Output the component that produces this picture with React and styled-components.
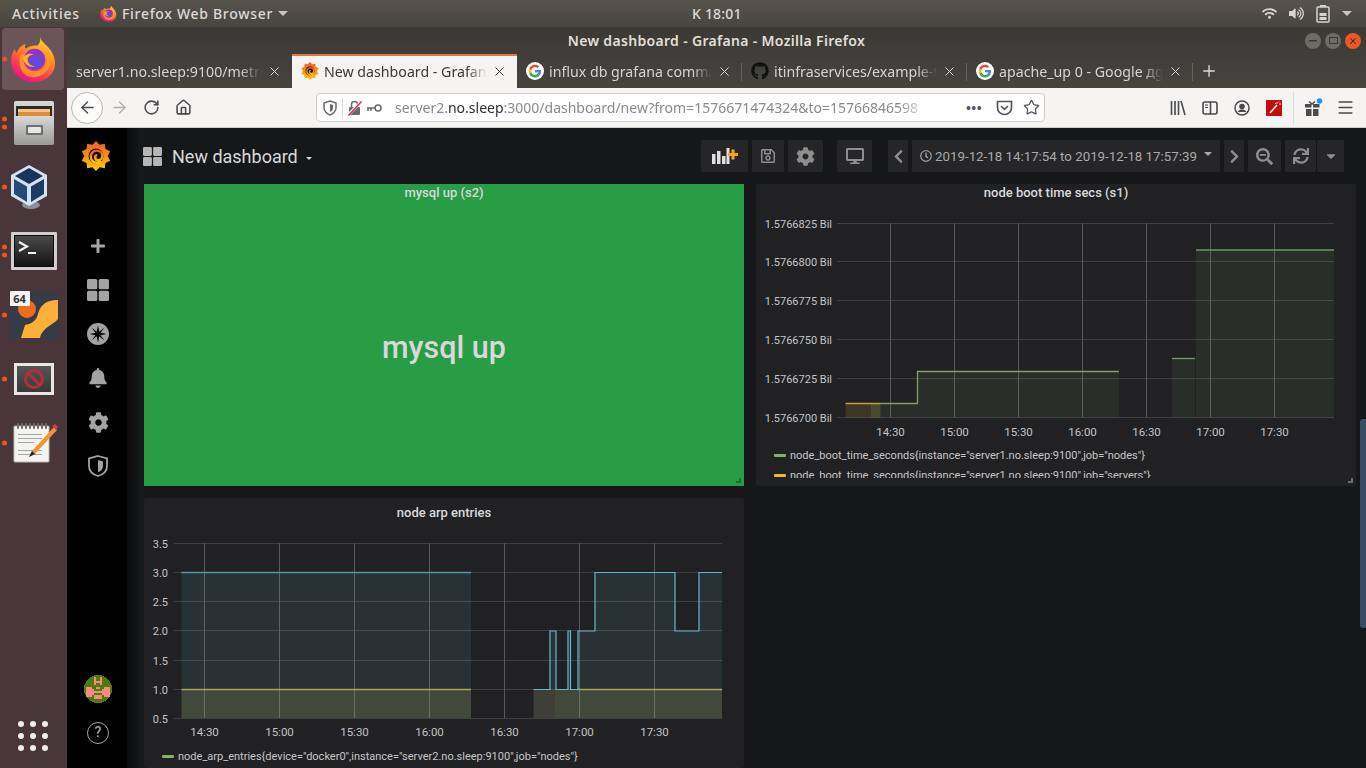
import React from 'react';
import styled, { createGlobalStyle } from 'styled-components';
import { X, Plus, ArrowLeft, ArrowRight, RotateCw, Home, Star, Menu } from 'lucide-react';
import {
  FaBell, FaCog, FaPlus, FaRegSave, FaDesktop, FaChevronLeft, FaChevronRight,
  FaSearchMinus, FaSync, FaRegClock, FaWifi, FaVolumeUp, FaGithub, FaCaretDown,
} from 'react-icons/fa';

const Global = createGlobalStyle`
  html, body { margin: 0; padding: 0; height: 768px; overflow: hidden; background: #161719; }
  #root { height: 768px; }
  * { box-sizing: border-box; }
`;

const UI_FONT = `"Noto Sans", "Open Sans", sans-serif`;
const GF_FONT = `Roboto, "Liberation Sans", sans-serif`;

const Screen = styled.div`
  width: 1366px;
  height: 768px;
  display: flex;
  flex-direction: column;
  overflow: hidden;
  position: relative;
`;

// ---------------------------------------------------------------------------
const TopBar = styled.div`
  height: 27px;
  flex: none;
  display: flex;
  align-items: center;
  padding-left: 12px;
  background: linear-gradient(#57544c, #47453e);
  color: #dcdad4;
  font: 500 14px ${UI_FONT};
`;
const Activities = styled.div`
  width: 88px;
  letter-spacing: 0.75px;
`;
const AppMenu = styled.div`
  width: 592px;
  display: flex;
  align-items: center;
  gap: 5px;
  letter-spacing: 0.7px;
`;
const Clock = styled.div`
  letter-spacing: 0.2px;
`;
const Tray = styled.div`
  margin-left: auto;
  display: flex;
  align-items: center;
  gap: 12px;
  padding-right: 14px;
`;
const Caret = styled.span`
  display: inline-block;
  border-left: ${p => p.$size || 5}px solid transparent;
  border-right: ${p => p.$size || 5}px solid transparent;
  border-top: ${p => p.$size || 5}px solid ${p => p.$color || '#c9c7c1'};
`;

const Body = styled.div`
  flex: 1;
  display: flex;
  min-height: 0;
`;

// ---------------------------------------------------------------------------
const Dock = styled.div`
  width: 67px;
  flex: none;
  display: flex;
  flex-direction: column;
  background: #48363b;
`;
const DockItem = styled.div`
  height: 64px;
  flex: none;
  display: flex;
  align-items: center;
  justify-content: center;
  position: relative;
  padding-right: ${p => p.$right || 0}px;
  padding-left: ${p => p.$left || 0}px;
  &::before {
    content: '';
    display: ${p => (p.$active ? 'block' : 'none')};
    position: absolute;
    left: 2px;
    right: 3px;
    top: 1px;
    bottom: 1px;
    border-radius: 4px;
    background: #6a5558;
  }
  & svg, & > div { position: relative; }
`;
const RunDots = styled.div`
  position: absolute !important;
  left: 2px;
  top: 50%;
  transform: translateY(-50%);
  display: flex;
  flex-direction: column;
  gap: 3px;
  z-index: 1;
`;
const RunDot = styled.span`
  display: block;
  width: 5px;
  height: 5px;
  border-radius: 50%;
  background: #e95420;
`;
const AppGrid = styled.div`
  margin-top: auto;
  margin-bottom: 17px;
  margin-left: 18px;
  width: 30px;
  display: grid;
  grid-template-columns: repeat(3, 6px);
  gap: 6px;
`;
const AppGridDot = styled.span`
  width: 6px;
  height: 6px;
  border-radius: 50%;
  background: #f1efec;
`;
const BadgeBox = styled.div`
  width: 48px;
  height: 48px;
  position: relative;
`;
const Badge64 = styled.span`
  position: absolute;
  left: 0;
  top: 0;
  width: 20px;
  height: 15px;
  background: #f4f4f4;
  border-radius: 1px;
  color: #333;
  font: 700 11px/15px ${UI_FONT};
  text-align: center;
`;

// ---------------------------------------------------------------------------
const Window = styled.div`
  flex: 1;
  min-width: 0;
  display: flex;
  flex-direction: column;
`;
const TitleBar = styled.div`
  height: 27px;
  flex: none;
  display: grid;
  grid-template-columns: 1fr auto 1fr;
  align-items: center;
  background: linear-gradient(#3a3934, #3f3e38);
  color: #e2dfd7;
  font: 600 14px ${UI_FONT};
  letter-spacing: 0.32px;
`;
const WindowTitle = styled.div`
  grid-column: 2;
`;
const WinButtons = styled.div`
  grid-column: 3;
  justify-self: end;
  display: flex;
  gap: 4px;
  padding-right: 5px;
`;
const WinButton = styled.div`
  width: 16px;
  height: 16px;
  border-radius: 50%;
  display: flex;
  align-items: center;
  justify-content: center;
  background: ${p => (p.$close ? '#e9572a' : '#6c6b64')};
  color: ${p => (p.$close ? '#5a2010' : '#3a3934')};
`;
const TabStrip = styled.div`
  height: 34px;
  flex: none;
  display: flex;
  align-items: stretch;
  background: linear-gradient(#3f3e38, #45443e);
`;
const Tab = styled.div`
  width: ${p => p.$w || 225}px;
  flex: none;
  display: flex;
  align-items: center;
  padding: 0 10px 2px 9px;
  gap: 5px;
  position: relative;
  color: ${p => (p.$active ? '#3a3a3a' : '#d6d4ce')};
  background: ${p => (p.$active ? '#f5f4f2' : 'transparent')};
  border-top: ${p => (p.$active ? '2px solid #e8734a' : '2px solid transparent')};
  font: 400 14.2px ${UI_FONT};
  &::after {
    content: '';
    display: ${p => (p.$sep ? 'block' : 'none')};
    position: absolute;
    right: 0;
    top: 7px;
    bottom: 7px;
    width: 1px;
    background: #64635c;
  }
`;
const TabLabel = styled.span`
  flex: 1;
  min-width: 0;
  white-space: nowrap;
  overflow: hidden;
  -webkit-mask-image: linear-gradient(to right, #000 88%, transparent 100%);
  mask-image: linear-gradient(to right, #000 88%, transparent 100%);
`;
const NewTab = styled.div`
  width: 32px;
  display: flex;
  align-items: center;
  justify-content: center;
  color: #dedcd6;
`;
const NavBar = styled.div`
  height: 40px;
  flex: none;
  display: flex;
  align-items: center;
  padding: 0 5px 0 4px;
  background: #f5f4f2;
  border-bottom: 1px solid #cfcdc9;
  color: #4a4a4f;
`;
const BackCircle = styled.div`
  width: 32px;
  height: 32px;
  border-radius: 50%;
  background: #fbfbfa;
  border: 1px solid #b8b7b3;
  display: flex;
  align-items: center;
  justify-content: center;
`;
const NavSlot = styled.div`
  width: 32px;
  height: 32px;
  flex: none;
  display: flex;
  align-items: center;
  justify-content: center;
  color: ${p => (p.$dim ? '#b1b1b1' : '#4a4a4f')};
`;
const UrlBar = styled.div`
  margin-left: 117px;
  width: 729px;
  height: 29px;
  flex: none;
  display: flex;
  align-items: center;
  background: #fff;
  border: 1px solid #cfcecb;
  border-radius: 4px;
  padding: 0 4px 0 6px;
`;
const UrlDivider = styled.span`
  width: 1px;
  height: 20px;
  background: #dcdcdc;
  margin: 0 5px 0 5px;
`;
const LockGap = styled.span`
  width: 4px;
  flex: none;
`;
const UrlText = styled.div`
  width: 535px;
  margin-left: 13px;
  white-space: nowrap;
  overflow: hidden;
  color: #8a8a8e;
  font: 400 14px ${UI_FONT};
  -webkit-mask-image: linear-gradient(to right, #000 94%, transparent 100%);
  mask-image: linear-gradient(to right, #000 94%, transparent 100%);
`;
const UrlHost = styled.span`
  color: #2f2f33;
`;
const UrlActions = styled.div`
  margin-left: auto;
  display: flex;
  align-items: center;
  gap: 10px;
  color: #55555a;
`;
const Dots = styled.span`
  font: 700 13px ${UI_FONT};
  letter-spacing: 0.5px;
  width: 24px;
  text-align: center;
`;
const NavTools = styled.div`
  margin-left: auto;
  display: flex;
  align-items: center;
`;
const NavSep = styled.span`
  width: 1px;
  height: 32px;
  background: #dddbd7;
  margin: 0 3px;
`;

// ---------------------------------------------------------------------------
const Grafana = styled.div`
  flex: 1;
  min-height: 0;
  display: flex;
  background: #161719;
  font-family: ${GF_FONT};
`;
const SideMenu = styled.div`
  width: 60px;
  flex: none;
  display: flex;
  flex-direction: column;
  background: #000;
  color: #a3a3a3;
`;
const SideLogo = styled.div`
  height: 56px;
  margin-bottom: 40px;
  display: flex;
  align-items: center;
  justify-content: center;
  padding-right: 3px;
`;
const SideItem = styled.div`
  height: 44px;
  flex: none;
  display: flex;
  align-items: center;
  justify-content: center;
  padding-left: 2px;
  margin-top: ${p => (p.$push ? 'auto' : '0')};
`;
const HelpRing = styled.div`
  width: 22px;
  height: 22px;
  border-radius: 50%;
  border: 1.5px solid #a3a3a3;
  color: #a3a3a3;
  font: 500 14px/19px ${GF_FONT};
  text-align: center;
`;
const SideSpacer = styled.div`
  height: 13px;
  flex: none;
`;
const Main = styled.div`
  flex: 1;
  min-width: 0;
  display: flex;
  flex-direction: column;
  background: linear-gradient(to right, #0b0c0e, #161719 14px);
`;
const Header = styled.div`
  height: 56px;
  flex: none;
  display: flex;
  align-items: center;
  padding: 0 22px 0 16px;
`;
const DashTitle = styled.div`
  display: flex;
  align-items: center;
  color: #d8d9da;
  font: 400 18px ${GF_FONT};
`;
const DashIconBox = styled.span`
  display: flex;
  margin-right: 10px;
`;
const TitleCaret = styled.span`
  margin-left: 8px;
  margin-top: 5px;
  border-left: 3.5px solid transparent;
  border-right: 3.5px solid transparent;
  border-top: 3.5px solid #d8d9da;
`;
const HeaderTools = styled.div`
  margin-left: auto;
  display: flex;
  align-items: center;
  gap: 4px;
`;
const ToolButton = styled.div`
  width: ${p => p.$w}px;
  height: 32px;
  margin-left: ${p => p.$gap || 0}px;
  display: flex;
  align-items: center;
  justify-content: center;
  gap: 3px;
  background: #262628;
  border-radius: 2px;
  color: ${p => p.$color || '#8e8e8e'};
  font: 400 13.3px ${GF_FONT};
  white-space: nowrap;
`;
const TimeCaret = styled.span`
  display: flex;
  margin-left: 4px;
  margin-bottom: 4px;
`;
const ToolPair = styled.div`
  display: flex;
  gap: 1px;
`;
const Grid = styled.div`
  flex: 1;
  min-height: 0;
  display: grid;
  grid-template-columns: 600px 600px;
  grid-template-rows: 302px 1fr;
  gap: 12px;
  padding-left: 17px;
`;
const Panel = styled.div`
  position: relative;
  display: flex;
  flex-direction: column;
  overflow: hidden;
  background: ${p => p.$bg || '#212124'};
  border-radius: ${p => (p.$bg ? 0 : 3)}px;
`;
const PanelTitle = styled.div`
  height: 28px;
  flex: none;
  text-align: center;
  color: #d8d9da;
  font: 500 13px/${p => p.$line}px ${GF_FONT};
`;
const SingleStat = styled.div`
  flex: 1;
  display: flex;
  align-items: center;
  justify-content: center;
  color: #d8d9da;
  font: 500 30.5px ${GF_FONT};
  padding-bottom: 4px;
`;
const ChartSvg = styled.svg`
  display: block;
  flex: none;
`;
const AxisText = styled.text`
  fill: #c4c4c4;
  font: 400 ${p => p.$size}px ${GF_FONT};
`;
const Legend = styled.div`
  height: ${p => p.$h}px;
  flex: none;
  overflow: hidden;
  padding-left: 18px;
`;
const LegendRow = styled.div`
  height: 20px;
  display: flex;
  align-items: center;
  gap: 4px;
  color: #c7c7c7;
  font: 400 11px ${GF_FONT};
  white-space: nowrap;
`;
const LegendSwatch = styled.span`
  width: 12px;
  height: 3px;
  flex: none;
  border-radius: 1px;
  background: ${p => p.$color};
`;
const ResizeMark = styled.span`
  position: absolute;
  right: 3px;
  bottom: 3px;
  width: 5px;
  height: 5px;
  border-right: 2px solid ${p => p.$color || '#6b6b6b'};
  border-bottom: 2px solid ${p => p.$color || '#6b6b6b'};
`;
const ScrollThumb = styled.div`
  position: absolute;
  right: 0;
  top: 419px;
  width: 6px;
  height: 209px;
  background: #3a4a63;
  border-radius: 3px 0 0 3px;
`;

// ---------------------------------------------------------------------------
// drawings

function FirefoxLogo({ size = 48 }) {
  return (
    <svg width={size} height={size} viewBox="0 0 48 48">
      <defs>
        <linearGradient id="ffBody" x1="0.8" y1="0" x2="0.3" y2="1">
          <stop offset="0" stopColor="#ffe03a" />
          <stop offset="0.4" stopColor="#ff8a1f" />
          <stop offset="0.75" stopColor="#f8375a" />
          <stop offset="1" stopColor="#e3128c" />
        </linearGradient>
        <radialGradient id="ffGlobe" cx="0.55" cy="0.65" r="0.6">
          <stop offset="0" stopColor="#5650dc" />
          <stop offset="1" stopColor="#9a30c4" />
        </radialGradient>
      </defs>
      <path d="M31 1c1 6 6 7 10 13 4 5 5 10 5 14 0 11-10 19-22 19C11 47 1 38 1 25c0-5 2-9 4-12 0 2 1 3 2 4 1-4 4-7 9-9-1 2-1 4 0 5 4-3 9-4 12-3 3-3 3-6 3-9z" fill="url(#ffBody)" />
      <path d="M10 21c2-3 6-4 9-2-3 1-4 3-5 5 0 6 4 12 11 12 8 0 13-6 13-13 0-3-1-5-2-7 3 2 5 6 5 10 0 9-8 16-17 16C14 42 8 33 10 21z" fill="#ff9a24" opacity="0.85" />
      <circle cx="25" cy="24" r="11" fill="url(#ffGlobe)" />
      <path d="M13 22c3-4 8-5 12-3-3 0-7 2-7 5 0 4 4 7 8 7-6 2-12-2-13-9z" fill="#ffb020" />
    </svg>
  );
}

function FilesIcon() {
  return (
    <svg width="42" height="46" viewBox="0 0 42 46">
      <defs>
        <linearGradient id="cab" x1="0" y1="0" x2="0" y2="1">
          <stop offset="0" stopColor="#d8d8d6" />
          <stop offset="1" stopColor="#9b9b99" />
        </linearGradient>
      </defs>
      <rect x="1" y="1" width="40" height="44" rx="2" fill="url(#cab)" />
      <rect x="3" y="6" width="36" height="12" fill="#2e2a28" />
      <rect x="5" y="9" width="32" height="3" fill="#f4c48c" />
      <rect x="5" y="12" width="32" height="5" fill="#e08a3c" />
      <path d="M2 16h38l1 2v26H1V18z" fill="url(#cab)" />
      <rect x="13" y="25" width="17" height="10" rx="1" fill="#6f6f6d" />
      <rect x="15" y="27" width="13" height="6" rx="1" fill="#e6e6e4" />
    </svg>
  );
}

function VBoxIcon() {
  return (
    <svg width="38" height="46" viewBox="0 0 38 46">
      <ellipse cx="21" cy="41" rx="9" ry="4" fill="#8b8e9c" />
      <path d="M19 1L37 11v21L19 42 1 32V11z" fill="#d6e2ef" />
      <path d="M19 4L33 12 19 20 5 12z" fill="#1a3358" />
      <path d="M4 15l13 7.500V38L4 30z" fill="#244a78" />
      <path d="M34 15l-13 7.500V38l13-8z" fill="#1b3a64" />
    </svg>
  );
}

function TerminalIcon() {
  return (
    <svg width="46" height="38" viewBox="0 0 46 38">
      <defs>
        <linearGradient id="term" x1="0" y1="0" x2="0" y2="1">
          <stop offset="0" stopColor="#4a4a4a" />
          <stop offset="1" stopColor="#141414" />
        </linearGradient>
      </defs>
      <rect x="0" y="0" width="46" height="38" rx="1" fill="#cfcfcf" />
      <rect x="3" y="3" width="40" height="32" fill="#0c0c0c" />
      <rect x="4" y="4" width="38" height="30" fill="url(#term)" />
      <path d="M8 10l8 4.500-8 4.500" fill="none" stroke="#f2f2f2" strokeWidth="2.200" />
      <rect x="17" y="20" width="8" height="2" fill="#f2f2f2" />
    </svg>
  );
}

function SixtyFourIcon() {
  return (
    <BadgeBox>
      <svg width="48" height="48" viewBox="0 0 48 48">
        <rect x="0" y="1" width="48" height="47" rx="2" fill="#353c47" />
        <circle cx="17" cy="18" r="9" fill="#ee6c1d" />
        <path d="M48 9C34 9 30 16 28 23 26 31 20 33 15 34L11 47H30C31 41 36 37 42 33 45 31 47 29 48 28z" fill="#fbb03b" />
      </svg>
      <Badge64>64</Badge64>
    </BadgeBox>
  );
}

function BlockedIcon() {
  return (
    <svg width="40" height="32" viewBox="0 0 40 32">
      <defs>
        <linearGradient id="blocked" x1="0" y1="0" x2="0" y2="1">
          <stop offset="0" stopColor="#555" />
          <stop offset="1" stopColor="#383838" />
        </linearGradient>
      </defs>
      <rect width="40" height="32" fill="#e6e6e6" />
      <rect x="3" y="3" width="34" height="26" fill="url(#blocked)" />
      <circle cx="20" cy="16" r="8.500" fill="none" stroke="#b3303a" strokeWidth="3" />
      <path d="M14 10l12 12" stroke="#b3303a" strokeWidth="3" />
    </svg>
  );
}

function NotepadIcon() {
  return (
    <svg width="46" height="40" viewBox="0 0 46 40">
      <rect x="2" y="3" width="35" height="36" rx="1" fill="#f3f3ef" stroke="#b9b9b5" />
      {[5, 9, 13, 17, 21, 25, 29, 33].map(x => (
        <rect key={x} x={x} y="0" width="2" height="6" rx="1" fill="#6d6d6d" />
      ))}
      {[11, 15, 19, 27, 31].map(y => (
        <rect key={y} x="6" y={y} width={y === 19 ? 16 : 24} height="1" fill="#a5a5a5" />
      ))}
      <path d="M42 4l3 3-22 24-6 3 3-6z" fill="#f0962e" />
      <path d="M40 3l3-2 3 3-2 3z" fill="#c9404a" />
      <path d="M17 34l3-6 3 3z" fill="#222" />
    </svg>
  );
}

function GrafanaLogo({ size = 28 }) {
  const pts = [];
  for (let i = 0; i < 20; i++) {
    const r = i % 2 === 0 ? 50 : 39;
    const a = (i * Math.PI) / 10 - Math.PI / 2;
    pts.push(`${50 + r * Math.cos(a)},${50 + r * Math.sin(a)}`);
  }
  return (
    <svg width={size} height={size} viewBox="0 0 100 100">
      <defs>
        <linearGradient id="gfSun" x1="0" y1="0" x2="0" y2="1">
          <stop offset="0" stopColor="#f05a28" />
          <stop offset="1" stopColor="#fbca0a" />
        </linearGradient>
      </defs>
      <polygon points={pts.join(' ')} fill="url(#gfSun)" />
      <circle cx="50" cy="50" r="25" fill="#111" />
      <path d="M68 68c-10 8-28 6-34-8-5-12 3-28 18-28 11 0 19 8 19 18 0 8-6 14-13 14-7 0-11-5-11-10 0-4 3-7 7-7" fill="none" stroke="url(#gfSun)" strokeWidth="8" />
    </svg>
  );
}

function GoogleIcon() {
  return (
    <svg width="18" height="18" viewBox="0 0 48 48">
      <circle cx="24" cy="24" r="24" fill="#fff" />
      <path d="M40 24.500c0-1.200-.1-2.300-.3-3.400H24v6.500h9c-.4 2.100-1.600 3.800-3.300 5v4.200h5.300c3.100-2.900 5-7.100 5-12.300z" fill="#4285f4" />
      <path d="M24 41c4.500 0 8.300-1.500 11-4l-5.300-4.200c-1.500 1-3.400 1.600-5.700 1.600-4.400 0-8.100-3-9.400-7H9.100v4.300C11.900 37.200 17.500 41 24 41z" fill="#34a853" />
      <path d="M14.600 27.400c-.3-1-.5-2.200-.5-3.400s.2-2.300.5-3.400v-4.300H9.100C8 18.600 7.400 21.200 7.400 24s.6 5.400 1.700 7.700z" fill="#fbbc05" />
      <path d="M24 13.600c2.500 0 4.700.9 6.500 2.500l4.800-4.800C32.300 8.700 28.500 7 24 7 17.500 7 11.900 10.800 9.100 16.300l5.500 4.300c1.300-4 5-7 9.400-7z" fill="#ea4335" />
    </svg>
  );
}

function BatteryIcon() {
  return (
    <svg width="14" height="18" viewBox="0 0 14 18">
      <rect x="4" y="0" width="6" height="2" fill="#d6d4ce" />
      <rect x="1" y="2" width="12" height="15" rx="1" fill="none" stroke="#d6d4ce" strokeWidth="1.500" />
      <rect x="3.500" y="8" width="7" height="3" fill="#d6d4ce" />
      <rect x="3.500" y="12" width="7" height="3" fill="#d6d4ce" />
    </svg>
  );
}

function DashGrid({ size = 22, color = '#a3a3a3' }) {
  return (
    <svg width={size} height={size} viewBox="0 0 22 22">
      <rect x="0" y="0" width="10.300" height="10.300" rx="1.500" fill={color} />
      <rect x="11.700" y="0" width="10.300" height="10.300" rx="1.500" fill={color} />
      <rect x="0" y="11.700" width="10.300" height="10.300" rx="1.500" fill={color} />
      <rect x="11.700" y="11.700" width="10.300" height="10.300" rx="1.500" fill={color} />
    </svg>
  );
}

function ExploreIcon() {
  return (
    <svg width="22" height="22" viewBox="0 0 22 22">
      <circle cx="11" cy="11" r="11" fill="#a3a3a3" />
      <path d="M11 2.500l1.300 6.200L17.500 4.500l-4 5.300L19.500 11l-6 1.200 4 5.300-5.200-4.200L11 19.500l-1.300-6.200-5.200 4.200 4-5.300L2.500 11l6-1.200-4-5.300 5.200 4.200z" fill="#000" />
    </svg>
  );
}

function ShieldIcon() {
  return (
    <svg width="20" height="22" viewBox="0 0 20 22">
      <path d="M10 1l9 2.500V11c0 5-4 8.500-9 10-5-1.500-9-5-9-10V3.500z" fill="none" stroke="#a3a3a3" strokeWidth="1.800" />
      <path d="M10 5l5 1.500V11c0 3-2 5-5 6.500z" fill="#a3a3a3" />
    </svg>
  );
}

function Avatar() {
  const pink = '#f98b7c';
  return (
    <svg width="28" height="28" viewBox="0 0 14 14" shapeRendering="crispEdges">
      <circle cx="7" cy="7" r="7" fill="#4f7a10" />
      <rect x="5" y="1" width="1" height="4" fill={pink} />
      <rect x="8" y="1" width="1" height="4" fill={pink} />
      <rect x="5" y="3" width="4" height="1" fill={pink} />
      <rect x="1" y="6" width="3" height="5" fill={pink} />
      <rect x="10" y="6" width="3" height="5" fill={pink} />
      <rect x="4" y="7" width="1" height="3" fill={pink} />
      <rect x="9" y="7" width="1" height="3" fill={pink} />
      <rect x="6" y="6" width="2" height="1" fill={pink} />
      <rect x="5" y="8" width="4" height="1" fill={pink} />
      <rect x="5" y="10" width="4" height="2" fill={pink} />
    </svg>
  );
}

function PlusChartIcon() {
  return (
    <svg width="26" height="16" viewBox="0 0 26 16">
      <rect x="0" y="6" width="3.500" height="10" fill="#e0e0e0" />
      <rect x="5" y="3" width="3.500" height="13" fill="#e0e0e0" />
      <rect x="10" y="8" width="3.500" height="8" fill="#e0e0e0" />
      <rect x="14.500" y="0" width="3" height="16" fill="#e0e0e0" />
      <path d="M16 5h3.500V1.500h3V5H26v3h-3.500v3.500h-3V8H16z" fill="#f5a623" />
    </svg>
  );
}

function PocketIcon() {
  return (
    <svg width="17" height="16" viewBox="0 0 17 16">
      <path d="M1.500 1.500h14v6c0 4-3 7-7 7s-7-3-7-7z" fill="none" stroke="#55555a" strokeWidth="1.700" />
      <path d="M5 6l3.500 3.300L12 6" fill="none" stroke="#55555a" strokeWidth="1.700" />
    </svg>
  );
}

function ShieldOutline() {
  return (
    <svg width="14" height="16" viewBox="0 0 14 16">
      <path d="M7 1l6 2v5c0 3-3 6-6 7-3-1-6-4-6-7V3z" fill="none" stroke="#6a6a6e" strokeWidth="1.500" />
      <path d="M7 4l3 1v3c0 2-1 3-3 4z" fill="#6a6a6e" />
    </svg>
  );
}

function InsecureLock() {
  return (
    <svg width="14" height="16" viewBox="0 0 14 16">
      <rect x="1" y="7" width="11" height="8" rx="1" fill="#6a6a6e" />
      <path d="M3.500 7V4.500a3 3 0 0 1 6 0V7" fill="none" stroke="#6a6a6e" strokeWidth="1.500" />
      <path d="M0 15L13 2" stroke="#f5f4f2" strokeWidth="3" />
      <path d="M0.500 15.500L13.500 1.500" stroke="#e22850" strokeWidth="1.500" />
    </svg>
  );
}

function KeyIcon() {
  return (
    <svg width="16" height="8" viewBox="0 0 16 8">
      <circle cx="12" cy="4" r="3" fill="none" stroke="#6a6a6e" strokeWidth="1.500" />
      <path d="M9 4H1M2 4v3M5 4v3" stroke="#6a6a6e" strokeWidth="1.500" fill="none" />
    </svg>
  );
}

function LibraryIcon() {
  return (
    <svg width="16" height="16" viewBox="0 0 16 16">
      <path d="M1.500 1v14M5 1v14M8.500 1v14M11 1l4 14" stroke="#4a4a4f" strokeWidth="1.600" fill="none" />
    </svg>
  );
}

function SidebarIcon() {
  return (
    <svg width="16" height="14" viewBox="0 0 16 14">
      <rect x="1" y="1" width="14" height="12" rx="2" fill="none" stroke="#4a4a4f" strokeWidth="1.600" />
      <path d="M8.500 1v12" stroke="#4a4a4f" strokeWidth="1.600" />
      <path d="M3 4h3M3 6.500h3" stroke="#4a4a4f" strokeWidth="1.200" />
    </svg>
  );
}

function AccountIcon() {
  return (
    <svg width="16" height="16" viewBox="0 0 16 16">
      <circle cx="8" cy="8" r="7" fill="none" stroke="#4a4a4f" strokeWidth="1.500" />
      <circle cx="8" cy="6.500" r="2.800" fill="#4a4a4f" />
      <path d="M3.500 12c1-2 3-2.500 4.500-2.500s3.500.5 4.500 2.500" fill="#4a4a4f" />
    </svg>
  );
}

function RedExtension() {
  return (
    <svg width="16" height="16" viewBox="0 0 16 16">
      <rect width="16" height="16" fill="#c40d0d" />
      <path d="M4 13l7-8" stroke="#fff" strokeWidth="1.500" />
      <path d="M11 2v2M13 4h2M13 1.500l1 1M9 3l1 1" stroke="#fff" strokeWidth="0.800" />
    </svg>
  );
}

function GiftIcon() {
  return (
    <svg width="20" height="20" viewBox="0 0 20 20">
      <rect x="2" y="6" width="6.500" height="3.500" fill="#4a4a4f" />
      <rect x="10" y="6" width="6.500" height="3.500" fill="#4a4a4f" />
      <rect x="3" y="11" width="5.500" height="7" fill="#4a4a4f" />
      <rect x="10" y="11" width="5.500" height="7" fill="#4a4a4f" />
      <path d="M6 3.500l3 2.500 3-2.500" stroke="#4a4a4f" strokeWidth="1.500" fill="none" />
      <circle cx="16.500" cy="3" r="2.800" fill="#1b9af5" />
    </svg>
  );
}

// ---------------------------------------------------------------------------
// charts are written in page coordinates, the viewBox moves them into the panel

const H_LINE = '#404042';
const V_LINE = '#59595b';

function Axes({ yTicks, xTicks, left, right, top, bottom, yRight, xDrop }) {
  return (
    <>
      {yTicks.map(t => (
        <g key={t.label}>
          <line x1={left} x2={right} y1={t.y} y2={t.y} stroke={H_LINE} />
          <AxisText $size={11} x={yRight} y={t.y + 4} textAnchor="end">{t.label}</AxisText>
        </g>
      ))}
      {xTicks.map(t => (
        <g key={t.label}>
          <line x1={t.x} x2={t.x} y1={top} y2={bottom} stroke={V_LINE} />
          <AxisText $size={11.5} x={t.x} y={bottom + xDrop} textAnchor="middle">{t.label}</AxisText>
        </g>
      ))}
    </>
  );
}

function BootChart() {
  const yTicks = [
    { y: 223.5, label: '1.5766825 Bil' },
    { y: 261.5, label: '1.5766800 Bil' },
    { y: 300.5, label: '1.5766775 Bil' },
    { y: 339.5, label: '1.5766750 Bil' },
    { y: 378.5, label: '1.5766725 Bil' },
    { y: 417.5, label: '1.5766700 Bil' },
  ];
  const xTicks = ['14:30', '15:00', '15:30', '16:00', '16:30', '17:00', '17:30'].map((label, i) => ({
    label, x: 890.5 + i * 64,
  }));
  const green = 'rgba(126,178,109,0.09)';
  return (
    <ChartSvg width="600" height="233" viewBox="756 212 600 233">
      <Axes yTicks={yTicks} xTicks={xTicks} left={837} right={1334} top={223} bottom={417} yRight={832} xDrop={19} />
      <rect x="845.500" y="403" width="35" height="14.500" fill="rgba(234,184,57,0.14)" />
      <rect x="871" y="403" width="9.500" height="14.500" fill={green} />
      <path d="M871 403.500H917.500V371.500H1119V417.500H871z" fill={green} />
      <rect x="1172" y="358" width="23" height="59.500" fill={green} />
      <rect x="1196" y="250" width="138" height="167.500" fill={green} />
      <path d="M845.500 403.500H880" stroke="#c99a35" strokeWidth="1.500" fill="none" />
      <path d="M880 403.500H917.500V371.500H1119" stroke="#7f9f6f" strokeWidth="1.300" fill="none" />
      <path d="M1172 358.500H1195" stroke="#759a66" strokeWidth="1.300" fill="none" />
      <path d="M1196 250H1334" stroke="#6f9a62" strokeWidth="1.500" fill="none" />
    </ChartSvg>
  );
}

function ArpChart() {
  const yTicks = [
    { y: 543.5, label: '3.5' },
    { y: 572.5, label: '3.0' },
    { y: 601.5, label: '2.5' },
    { y: 630.5, label: '2.0' },
    { y: 660.5, label: '1.5' },
    { y: 689.5, label: '1.0' },
    { y: 718.5, label: '0.5' },
  ];
  const xTicks = ['14:30', '15:00', '15:30', '16:00', '16:30', '17:00', '17:30'].map((label, i) => ({
    label, x: 204.5 + i * 75,
  }));
  const blue = 'rgba(110,208,224,0.09)';
  const olive = 'rgba(146,148,75,0.25)';
  return (
    <ChartSvg width="600" height="220" viewBox="144 526 600 220">
      <Axes yTicks={yTicks} xTicks={xTicks} left={174} right={722} top={543} bottom={718} yRight={168} xDrop={18} />
      <rect x="181.500" y="572" width="289.500" height="146" fill={blue} />
      <rect x="181.500" y="689" width="289.500" height="29" fill={olive} />
      <rect x="550" y="631" width="6" height="58" fill={blue} />
      <path d="M555 718V689H568V631H570.500V689H578V631H595V572H675V631H699V572H722V718z" fill={blue} />
      <rect x="533.500" y="689" width="21.500" height="29" fill="rgba(153,157,116,0.25)" />
      <rect x="555" y="689" width="167" height="29" fill={olive} />
      <path d="M181.500 572.500H471" stroke="#4f98a6" strokeWidth="1.500" fill="none" />
      <path d="M181.500 689.500H471M578 689.500H722" stroke="#a8a653" strokeWidth="1.500" fill="none" />
      <path d="M533.500 689.500H550V631H556V689.500H568V631H570.500V689.500H578V631H595V572.500H675V631H699V572.500H722" stroke="#63b8c8" strokeWidth="1.200" fill="none" />
    </ChartSvg>
  );
}

// ---------------------------------------------------------------------------
const tabs = [
  { w: 225, icon: null, label: 'server1.no.sleep:9100/metri' },
  { w: 225, active: true, icon: <GrafanaLogo size={18} />, label: 'New dashboard - Grafana' },
  { w: 225, sep: true, icon: <GoogleIcon />, label: 'influx db grafana comma' },
  { w: 225, sep: true, icon: <FaGithub size={18} color="#111" />, label: 'itinfraservices/example-t' },
  { w: 226, sep: true, icon: <GoogleIcon />, label: 'apache_up 0 - Google дg' },
];

function App() {
  return (
    <Screen>
      <Global />
      <TopBar>
        <Activities>Activities</Activities>
        <AppMenu>
          <FirefoxLogo size={17} />
          Firefox Web Browser
          <Caret />
        </AppMenu>
        <Clock>K 18:01</Clock>
        <Tray>
          <FaWifi size={15} color="#d6d4ce" />
          <FaVolumeUp size={15} color="#d6d4ce" />
          <BatteryIcon />
          <Caret />
        </Tray>
      </TopBar>
      <Body>
        <Dock>
          <DockItem $active>
            <RunDots><RunDot /></RunDots>
            <FirefoxLogo size={47} />
          </DockItem>
          <DockItem>
            <RunDots><RunDot /><RunDot /></RunDots>
            <FilesIcon />
          </DockItem>
          <DockItem $right={9}>
            <RunDots><RunDot /></RunDots>
            <VBoxIcon />
          </DockItem>
          <DockItem>
            <RunDots><RunDot /><RunDot /></RunDots>
            <TerminalIcon />
          </DockItem>
          <DockItem>
            <RunDots><RunDot /></RunDots>
            <SixtyFourIcon />
          </DockItem>
          <DockItem>
            <RunDots><RunDot /></RunDots>
            <BlockedIcon />
          </DockItem>
          <DockItem $left={2}>
            <RunDots><RunDot /></RunDots>
            <NotepadIcon />
          </DockItem>
          <AppGrid>
            {Array.from({ length: 9 }, (_, i) => <AppGridDot key={i} />)}
          </AppGrid>
        </Dock>
        <Window>
          <TitleBar>
            <WindowTitle>New dashboard - Grafana - Mozilla Firefox</WindowTitle>
            <WinButtons>
              <WinButton>
                <svg width="8" height="2"><rect width="8" height="1.500" fill="#3a3934" /></svg>
              </WinButton>
              <WinButton>
                <svg width="9" height="7"><rect x="0.500" y="0.500" width="8" height="6" fill="none" stroke="#3a3934" /></svg>
              </WinButton>
              <WinButton $close><X size={10} strokeWidth={2.5} /></WinButton>
            </WinButtons>
          </TitleBar>
          <TabStrip>
            {tabs.map(t => (
              <Tab key={t.label} $w={t.w} $active={t.active} $sep={t.sep}>
                {t.icon}
                <TabLabel>{t.label}</TabLabel>
                <X size={15} strokeWidth={1.6} />
              </Tab>
            ))}
            <NewTab><Plus size={18} strokeWidth={1.8} /></NewTab>
          </TabStrip>
          <NavBar>
            <BackCircle><ArrowLeft size={19} strokeWidth={1.8} /></BackCircle>
            <NavSlot $dim><ArrowRight size={19} strokeWidth={1.8} /></NavSlot>
            <NavSlot><RotateCw size={17} strokeWidth={2.2} /></NavSlot>
            <NavSlot><Home size={17} strokeWidth={2.2} /></NavSlot>
            <UrlBar>
              <ShieldOutline />
              <UrlDivider />
              <InsecureLock />
              <LockGap />
              <KeyIcon />
              <UrlText>
                server2.<UrlHost>no.sleep</UrlHost>:3000/dashboard/new?from=1576671474324&amp;to=15766846598
              </UrlText>
              <UrlActions>
                <Dots>•••</Dots>
                <PocketIcon />
                <Star size={17} strokeWidth={1.8} />
              </UrlActions>
            </UrlBar>
            <NavTools>
              <NavSlot><LibraryIcon /></NavSlot>
              <NavSlot><SidebarIcon /></NavSlot>
              <NavSlot><AccountIcon /></NavSlot>
              <NavSlot><RedExtension /></NavSlot>
              <NavSep />
              <NavSlot><GiftIcon /></NavSlot>
              <NavSlot><Menu size={19} strokeWidth={2} /></NavSlot>
            </NavTools>
          </NavBar>
          <Grafana>
            <SideMenu>
              <SideLogo><GrafanaLogo size={30} /></SideLogo>
              <SideItem><FaPlus size={16} /></SideItem>
              <SideItem><DashGrid /></SideItem>
              <SideItem><ExploreIcon /></SideItem>
              <SideItem><FaBell size={20} /></SideItem>
              <SideItem><FaCog size={21} /></SideItem>
              <SideItem><ShieldIcon /></SideItem>
              <SideItem $push><Avatar /></SideItem>
              <SideItem><HelpRing>?</HelpRing></SideItem>
              <SideSpacer />
            </SideMenu>
            <Main>
              <Header>
                <DashTitle>
                  <DashIconBox><DashGrid size={19} color="#b5b5b5" /></DashIconBox>
                  New dashboard
                  <TitleCaret />
                </DashTitle>
                <HeaderTools>
                  <ToolButton $w={47} $color="#e0e0e0"><PlusChartIcon /></ToolButton>
                  <ToolButton $w={32}><FaRegSave size={16} /></ToolButton>
                  <ToolButton $w={35}><FaCog size={19} /></ToolButton>
                  <ToolButton $w={35} $gap={10}><FaDesktop size={18} /></ToolButton>
                  <ToolButton $w={20} $gap={12}><FaChevronLeft size={15} /></ToolButton>
                  <ToolButton $w={308} $color="#a9a9a9">
                    <FaRegClock size={12} />
                    2019-12-18 14:17:54 to 2019-12-18 17:57:39
                    <TimeCaret><Caret $size={4} $color="#a9a9a9" /></TimeCaret>
                  </ToolButton>
                  <ToolButton $w={20}><FaChevronRight size={15} /></ToolButton>
                  <ToolButton $w={33}><FaSearchMinus size={17} /></ToolButton>
                  <ToolPair>
                    <ToolButton $w={31}><FaSync size={16} /></ToolButton>
                    <ToolButton $w={27}><FaCaretDown size={14} /></ToolButton>
                  </ToolPair>
                </HeaderTools>
              </Header>
              <Grid>
                <Panel $bg="#299c46">
                  <PanelTitle $line={17}>mysql up (s2)</PanelTitle>
                  <SingleStat>mysql up</SingleStat>
                  <ResizeMark $color="#1b6b30" />
                </Panel>
                <Panel>
                  <PanelTitle $line={17}>node boot time secs (s1)</PanelTitle>
                  <BootChart />
                  <Legend $h={33}>
                    <LegendRow>
                      <LegendSwatch $color="#7eb26d" />
                      {'node_boot_time_seconds{instance="server1.no.sleep:9100",job="nodes"}'}
                    </LegendRow>
                    <LegendRow>
                      <LegendSwatch $color="#eab839" />
                      {'node_boot_time_seconds{instance="server1.no.sleep:9100",job="servers"}'}
                    </LegendRow>
                  </Legend>
                  <ResizeMark />
                </Panel>
                <Panel>
                  <PanelTitle $line={29}>node arp entries</PanelTitle>
                  <ArpChart />
                  <Legend $h={22}>
                    <LegendRow>
                      <LegendSwatch $color="#7eb26d" />
                      {'node_arp_entries{device="docker0",instance="server2.no.sleep:9100",job="nodes"}'}
                    </LegendRow>
                  </Legend>
                </Panel>
              </Grid>
            </Main>
          </Grafana>
        </Window>
      </Body>
      <ScrollThumb />
    </Screen>
  );
}

export default App;
